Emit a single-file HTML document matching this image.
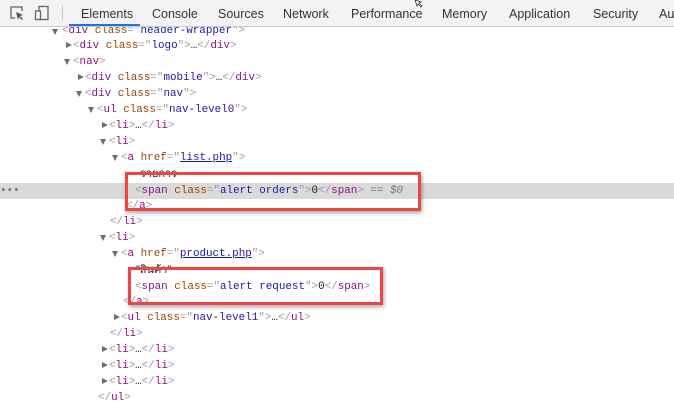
<!DOCTYPE html>
<html><head><meta charset="utf-8"><style>
body{margin:0;width:674px;height:402px;overflow:hidden;background:#fff;position:relative;font-family:"Liberation Mono",monospace;}
.tb{position:absolute;left:0;top:0;width:674px;height:26px;background:#f3f3f3;border-bottom:1px solid #ccc;z-index:5}
.tab{position:absolute;top:7px;font:12.5px "Liberation Sans",sans-serif;color:#333;white-space:nowrap}
.l{position:absolute;height:16px;line-height:16px;font-size:10.9px;white-space:pre;color:#222}
.t{color:#881280}.b{color:#a894a6}.a{color:#994500}.v{color:#1a1aa6}.u{color:#1a1aa6;text-decoration:underline}
.tri{position:absolute;width:0;height:0}
.tr{border-left:6px solid #6e6e6e;border-top:3.5px solid transparent;border-bottom:3.5px solid transparent}
.td{border-top:6px solid #6e6e6e;border-left:3.5px solid transparent;border-right:3.5px solid transparent}
.box{position:absolute;border:3px solid #f04545;box-shadow:1px 2px 4px rgba(0,0,0,.35)}
</style></head><body>
<div class="tb">
<svg style="position:absolute;left:9px;top:5px" width="16" height="16" viewBox="0 0 16 16"><path d="M6 13H2V2h11v4" fill="none" stroke="#666" stroke-width="1.3"/><path d="M7 7l7 3-3 1 3 3-1 1-3-3-1 3z" fill="#555"/></svg>
<svg style="position:absolute;left:34px;top:5px" width="16" height="16" viewBox="0 0 16 16"><rect x="5" y="1.5" width="9" height="13" fill="none" stroke="#666" stroke-width="1.3"/><rect x="1.5" y="6" width="5" height="8.5" fill="#f3f3f3" stroke="#666" stroke-width="1.3"/></svg>
<div style="position:absolute;left:62px;top:5px;width:1px;height:15px;background:#ccc"></div>
<div class="tab" style="left:81px;color:#333">Elements</div>
<div style="position:absolute;left:69px;top:24px;width:71px;height:2px;background:#1a73e8"></div>
<div class="tab" style="left:152px">Console</div>
<div class="tab" style="left:218px">Sources</div>
<div class="tab" style="left:283px">Network</div>
<div class="tab" style="left:351px">Performance</div>
<div class="tab" style="left:442px">Memory</div>
<div class="tab" style="left:509px">Application</div>
<div class="tab" style="left:593px">Security</div>
<div class="tab" style="left:659px">Au</div>
<svg style="position:absolute;left:414px;top:0" width="12" height="8"><path d="M1 0l2 6 1-2 3 3 1-1-3-3 2-1z" fill="#fff" stroke="#333" stroke-width=".8"/></svg>
</div>
<div style="position:absolute;left:0;top:183px;width:674px;height:16px;background:#dadada"></div>
<div class="l" style="left:0;top:183px;color:#777">•••</div>

<div class="tri td" style="left:52px;top:29px"></div><div class="l" style="left:62px;top:23px"><span class="b">&lt;</span><span class="t">div</span> <span class="a">class</span><span class="b">="</span><span class="v">header-wrapper</span><span class="b">"&gt;</span></div>
<div class="tri tr" style="left:66px;top:42px"></div><div class="l" style="left:73px;top:38px"><span class="b">&lt;</span><span class="t">div</span> <span class="a">class</span><span class="b">="</span><span class="v">logo</span><span class="b">"&gt;</span>…<span class="b">&lt;/</span><span class="t">div</span><span class="b">&gt;</span></div>
<div class="tri td" style="left:64px;top:59px"></div><div class="l" style="left:73px;top:54px"><span class="b">&lt;</span><span class="t">nav</span><span class="b">&gt;</span></div>
<div class="tri tr" style="left:78px;top:74px"></div><div class="l" style="left:85px;top:70px"><span class="b">&lt;</span><span class="t">div</span> <span class="a">class</span><span class="b">="</span><span class="v">mobile</span><span class="b">"&gt;</span>…<span class="b">&lt;/</span><span class="t">div</span><span class="b">&gt;</span></div>
<div class="tri td" style="left:76px;top:91px"></div><div class="l" style="left:85px;top:86px"><span class="b">&lt;</span><span class="t">div</span> <span class="a">class</span><span class="b">="</span><span class="v">nav</span><span class="b">"&gt;</span></div>
<div class="tri td" style="left:88px;top:107px"></div><div class="l" style="left:97px;top:102px"><span class="b">&lt;</span><span class="t">ul</span> <span class="a">class</span><span class="b">="</span><span class="v">nav-level0</span><span class="b">"&gt;</span></div>
<div class="tri tr" style="left:102px;top:122px"></div><div class="l" style="left:109px;top:118px"><span class="b">&lt;</span><span class="t">li</span><span class="b">&gt;</span>…<span class="b">&lt;/</span><span class="t">li</span><span class="b">&gt;</span></div>
<div class="tri td" style="left:100px;top:139px"></div><div class="l" style="left:109px;top:134px"><span class="b">&lt;</span><span class="t">li</span><span class="b">&gt;</span></div>
<div class="tri td" style="left:112px;top:155px"></div><div class="l" style="left:121px;top:150px"><span class="b">&lt;</span><span class="t">a</span> <span class="a">href</span><span class="b">="</span><span class="u">list.php</span><span class="b">"&gt;</span></div>
<div class="l" style="left:140px;top:166px;font-family:'Liberation Sans','Noto Sans CJK SC',sans-serif">รายการ</div>
<div class="l" style="left:135px;top:183px"><span class="b">&lt;</span><span class="t">span</span> <span class="a">class</span><span class="b">="</span><span class="v">alert orders</span><span class="b">"&gt;</span>0<span class="b">&lt;/</span><span class="t">span</span><span class="b">&gt;</span><span style="color:#777"> == <i>$0</i></span></div>
<div class="l" style="left:126px;top:198px"><span class="b">&lt;/</span><span class="t">a</span><span class="b">&gt;</span></div>
<div class="l" style="left:110px;top:214px"><span class="b">&lt;/</span><span class="t">li</span><span class="b">&gt;</span></div>
<div class="tri td" style="left:100px;top:235px"></div><div class="l" style="left:109px;top:230px"><span class="b">&lt;</span><span class="t">li</span><span class="b">&gt;</span></div>
<div class="tri td" style="left:112px;top:251px"></div><div class="l" style="left:121px;top:246px"><span class="b">&lt;</span><span class="t">a</span> <span class="a">href</span><span class="b">="</span><span class="u">product.php</span><span class="b">"&gt;</span></div>
<div class="l" style="left:136px;top:262px;font-family:'Liberation Sans','Noto Sans CJK SC',sans-serif">"สินค้า"</div>
<div class="l" style="left:135px;top:279px"><span class="b">&lt;</span><span class="t">span</span> <span class="a">class</span><span class="b">="</span><span class="v">alert request</span><span class="b">"&gt;</span>0<span class="b">&lt;/</span><span class="t">span</span><span class="b">&gt;</span></div>
<div class="l" style="left:123px;top:294px"><span class="b">&lt;/</span><span class="t">a</span><span class="b">&gt;</span></div>
<div class="tri tr" style="left:114px;top:314px"></div><div class="l" style="left:121px;top:310px"><span class="b">&lt;</span><span class="t">ul</span> <span class="a">class</span><span class="b">="</span><span class="v">nav-level1</span><span class="b">"&gt;</span>…<span class="b">&lt;/</span><span class="t">ul</span><span class="b">&gt;</span></div>
<div class="l" style="left:110px;top:326px"><span class="b">&lt;/</span><span class="t">li</span><span class="b">&gt;</span></div>
<div class="tri tr" style="left:102px;top:346px"></div><div class="l" style="left:109px;top:342px"><span class="b">&lt;</span><span class="t">li</span><span class="b">&gt;</span>…<span class="b">&lt;/</span><span class="t">li</span><span class="b">&gt;</span></div>
<div class="tri tr" style="left:102px;top:362px"></div><div class="l" style="left:109px;top:358px"><span class="b">&lt;</span><span class="t">li</span><span class="b">&gt;</span>…<span class="b">&lt;/</span><span class="t">li</span><span class="b">&gt;</span></div>
<div class="tri tr" style="left:102px;top:378px"></div><div class="l" style="left:109px;top:374px"><span class="b">&lt;</span><span class="t">li</span><span class="b">&gt;</span>…<span class="b">&lt;/</span><span class="t">li</span><span class="b">&gt;</span></div>
<div class="l" style="left:98px;top:390px"><span class="b">&lt;/</span><span class="t">ul</span><span class="b">&gt;</span></div>

<div class="box" style="left:125px;top:172px;width:290px;height:33px"></div>
<div class="box" style="left:128px;top:267px;width:249px;height:32px"></div>
</body></html>
